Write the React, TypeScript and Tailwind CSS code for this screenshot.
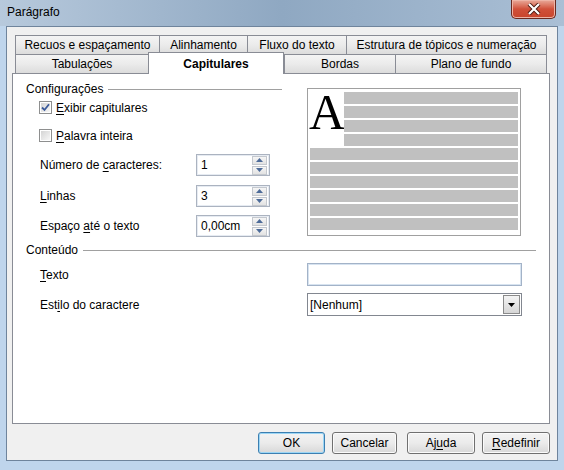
import React from 'react'

function K({ children }: { children: React.ReactNode }) {
  return <span className="underline underline-offset-[2px]">{children}</span>
}

function Tab({ label, w, active, last }: { label: string; w: string; active?: boolean; last?: boolean }) {
  if (active) {
    return (
      <div
        className={`${w} relative z-10 -mt-[2px] h-[22px] bg-white border-t border-x border-[#898c95] flex items-start justify-center pt-[4px] font-bold`}
      >
        {label}
      </div>
    )
  }
  return (
    <div
      className={`${w} h-[19px] border-t border-l ${last ? 'border-r' : ''} border-[#898c95] bg-gradient-to-b from-[#f4f4f4] via-[#ebebeb] to-[#dcdcdc] flex items-center justify-center`}
    >
      {label}
    </div>
  )
}

function Checkbox({ checked }: { checked?: boolean }) {
  return (
    <div className="w-[13px] h-[13px] border border-[#8e8f8f] bg-white p-[1px]">
      <div className="w-full h-full bg-gradient-to-br from-[#d4d4d4] to-[#f7f7f7] flex items-center justify-center">
        {checked && (
          <svg width="9" height="9" viewBox="0 0 9 9">
            <path d="M1 4.5 L3.5 7 L8 1.2" stroke="#3b5a9a" strokeWidth="1.8" fill="none" />
          </svg>
        )}
      </div>
    </div>
  )
}

function Spin({ value }: { value: string }) {
  return (
    <div className="w-[74px] h-[22px] border border-[#abb3c0] bg-white flex items-center shadow-[inset_0_0_0_1px_#e6ebf2]">
      <span className="flex-1 pl-[4px]">{value}</span>
      <div className="w-[15px] mr-[2px] flex flex-col gap-[1px]">
        <div className="h-[9px] border border-[#c4c8ce] bg-gradient-to-b from-[#f6f6f6] to-[#e2e2e2] flex items-center justify-center">
          <svg width="7" height="4" viewBox="0 0 7 4">
            <path d="M0 4 L3.5 0 L7 4 Z" fill="#4d6b99" />
          </svg>
        </div>
        <div className="h-[9px] border border-[#c4c8ce] bg-gradient-to-b from-[#f6f6f6] to-[#e2e2e2] flex items-center justify-center">
          <svg width="7" height="4" viewBox="0 0 7 4">
            <path d="M0 0 L7 0 L3.5 4 Z" fill="#4d6b99" />
          </svg>
        </div>
      </div>
    </div>
  )
}

function Btn({ children, w, cls, focus }: { children: React.ReactNode; w: string; cls?: string; focus?: boolean }) {
  return (
    <div
      className={`${w} ${cls ?? ''} h-[22px] rounded-[3px] border ${
        focus ? 'border-[#3c7fb1] shadow-[inset_0_0_0_1px_#9cd6f5]' : 'border-[#707070] shadow-[inset_0_0_0_1px_#fbfbfb]'
      } bg-gradient-to-b from-[#f3f3f3] via-[#ebebeb] to-[#d8d8d8] flex items-center justify-center`}
    >
      {children}
    </div>
  )
}

function Bar({ w = 'w-full' }: { w?: string }) {
  return <div className={`${w} h-[12px] bg-[#c0c0c0]`} />
}

export default function App() {
  return (
    <div className="w-[564px] h-[470px] bg-[#bfd5ec] font-['Liberation_Sans',Arial,sans-serif] text-[12px] text-black leading-[14px] overflow-hidden">
      {/* Title bar */}
      <div className="h-[26px] relative bg-gradient-to-r from-[#b7c9dc] via-[#8fa8c2] to-[#aabfd5]">
        <span className="absolute left-[7px] top-[5px] text-[12px] text-black">Parágrafo</span>
        <div className="absolute left-[511px] top-0 w-[45px] h-[19px] rounded-b-[5px] border border-t-0 border-[#6b2a20] bg-gradient-to-b from-[#e8a99a] via-[#d0503a] to-[#c8452c] flex items-center justify-center shadow-[inset_0_0_0_1px_#eeb4a6]">
          <svg width="14" height="12" viewBox="0 0 14 12">
            <path d="M2 1 L12 11 M12 1 L2 11" stroke="#4a1a12" strokeWidth="4" />
            <path d="M2 1 L12 11 M12 1 L2 11" stroke="#ffffff" strokeWidth="2.2" />
          </svg>
        </div>
      </div>

      {/* Client area */}
      <div className="mx-[6px] h-[435px] border border-[#6f849c] bg-[#f0f0f0] flex flex-col">
        <div className="ml-[5px] w-[538px] mt-[8px]">
          {/* Tabs */}
          <div className="ml-[3px] w-[532px]">
            <div className="flex h-[19px]">
              <Tab label="Recuos e espaçamento" w="w-[144px]" />
              <Tab label="Alinhamento" w="w-[88px]" />
              <Tab label="Fluxo do texto" w="w-[99px]" />
              <Tab label="Estrutura de tópicos e numeração" w="w-[201px]" last />
            </div>
            <div className="flex h-[19px] items-start">
              <Tab label="Tabulações" w="w-[133px]" />
              <Tab label="Capitulares" w="w-[136px]" active />
              <Tab label="Bordas" w="w-[111px]" />
              <Tab label="Plano de fundo" w="w-[152px]" last />
            </div>
          </div>

          {/* Panel */}
          <div className="h-[351px] border border-[#898c95] bg-white">
            <div className="flex items-start">
              <div className="ml-[13px] w-[256px]">
                <div className="mt-[8px] h-[14px] flex items-center">
                  <span>Configurações</span>
                  <div className="flex-1 ml-[5px] h-px bg-[#a0a0a0]" />
                </div>
                <div className="mt-[5px] h-[13px] flex items-center pl-[13px]">
                  <Checkbox checked />
                  <span className="ml-[4px]">
                    <K>E</K>xibir capitulares
                  </span>
                </div>
                <div className="mt-[15px] h-[13px] flex items-center pl-[13px]">
                  <Checkbox />
                  <span className="ml-[4px]">
                    <K>P</K>alavra inteira
                  </span>
                </div>
                <div className="mt-[12px] h-[22px] flex items-center pl-[14px]">
                  <span className="w-[156px]">
                    Número de <K>c</K>aracteres:
                  </span>
                  <Spin value="1" />
                </div>
                <div className="mt-[9px] h-[22px] flex items-center pl-[14px]">
                  <span className="w-[156px]">
                    <K>L</K>inhas
                  </span>
                  <Spin value="3" />
                </div>
                <div className="mt-[8px] h-[22px] flex items-center pl-[14px]">
                  <span className="w-[156px]">
                    Espaço <K>a</K>té o texto
                  </span>
                  <Spin value="0,00cm" />
                </div>
              </div>

              {/* Preview */}
              <div className="ml-[25px] mt-[14px] w-[214px] h-[148px] border border-[#a0a0a0] bg-white pt-[3px] px-[2px]">
                <div className="flex h-[54px]">
                  <div className="w-[34px] h-[54px] overflow-visible">
                    <span className="block text-[50px] leading-[40px] font-['Liberation_Serif','Times_New_Roman',serif] -ml-[1px]">
                      A
                    </span>
                  </div>
                  <div className="flex-1 flex flex-col gap-[2px]">
                    <Bar />
                    <Bar />
                    <Bar />
                    <Bar />
                  </div>
                </div>
                <div className="mt-[2px] flex flex-col gap-[2px]">
                  <Bar />
                  <Bar />
                  <Bar />
                  <Bar />
                  <Bar />
                  <Bar />
                </div>
              </div>
            </div>

            {/* Conteúdo */}
            <div className="ml-[13px] mr-[13px] mt-[6px] h-[14px] flex items-center">
              <span>Conteúdo</span>
              <div className="flex-1 ml-[5px] h-px bg-[#a0a0a0]" />
            </div>
            <div className="mt-[6px] h-[23px] flex items-center pl-[27px]">
              <span className="w-[267px]">
                <K>T</K>exto
              </span>
              <div className="w-[215px] h-[23px] border border-[#a3b3c8] shadow-[inset_0_0_0_1px_#d7e3f0] bg-white" />
            </div>
            <div className="mt-[7px] h-[23px] flex items-center pl-[27px]">
              <span className="w-[267px]">
                Est<K>i</K>lo do caractere
              </span>
              <div className="w-[215px] h-[23px] border border-[#828790] bg-white flex items-center">
                <span className="flex-1 pl-[2px]">[Nenhum]</span>
                <div className="w-[17px] h-[19px] mr-[1px] border border-[#8a8a8a] bg-gradient-to-b from-[#f4f4f4] to-[#d6d6d6] flex items-center justify-center">
                  <svg width="7" height="4" viewBox="0 0 7 4">
                    <path d="M0 0 L7 0 L3.5 4 Z" fill="#000" />
                  </svg>
                </div>
              </div>
            </div>
          </div>
        </div>

        {/* Buttons */}
        <div className="mt-[8px] flex justify-end pr-[7px]">
          <Btn w="w-[67px]" focus>
            OK
          </Btn>
          <Btn w="w-[65px]" cls="ml-[7px]">
            Cancelar
          </Btn>
          <Btn w="w-[68px]" cls="ml-[10px]">
            Aj<K>u</K>da
          </Btn>
          <Btn w="w-[68px]" cls="ml-[7px]">
            <K>R</K>edefinir
          </Btn>
        </div>
      </div>
    </div>
  )
}
